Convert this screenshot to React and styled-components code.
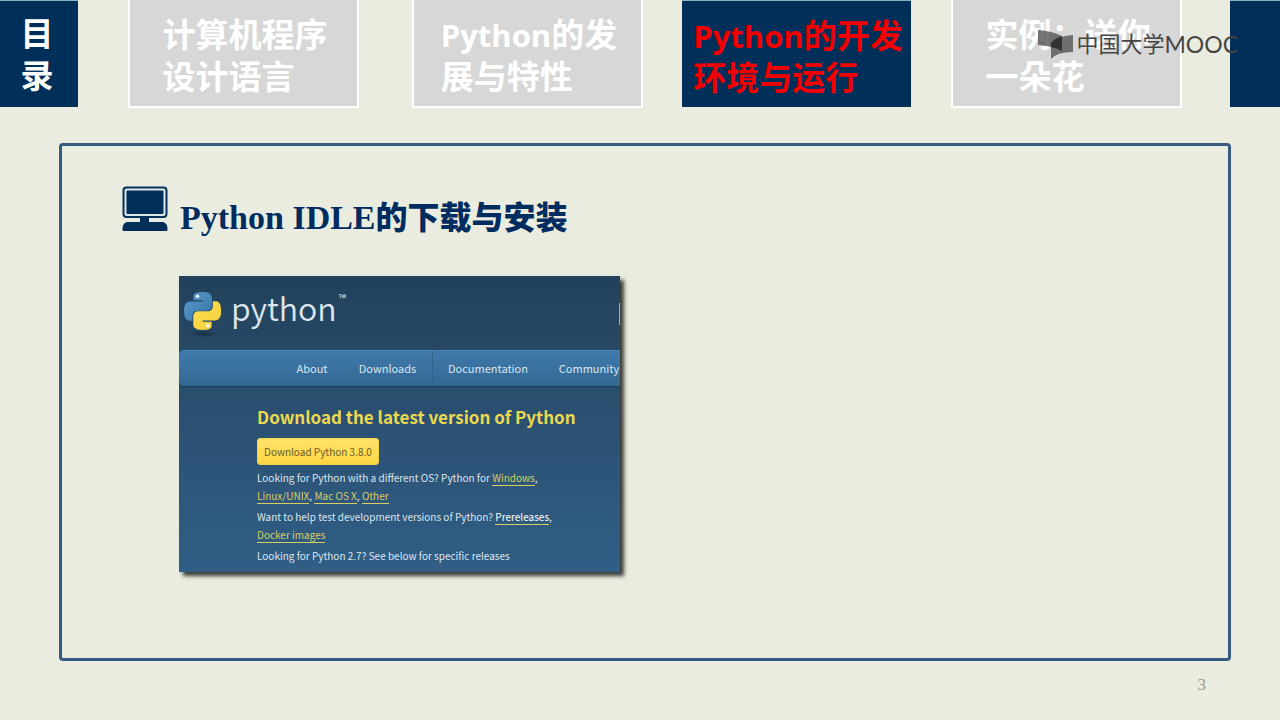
import React from 'react';
import styled, { createGlobalStyle } from 'styled-components';

const TABS = [
  { lines: [{ text: '计算机程序' }, { text: '设计语言' }], col: 3 },
  { lines: [{ latin: 'Python', text: '的发' }, { text: '展与特性' }], col: 5 },
  {
    lines: [{ latin: 'Python', text: '的开发' }, { text: '环境与运行' }],
    col: 7,
    active: true,
  },
  { lines: [{ text: '实例：送你' }, { text: '一朵花' }], col: 9 },
];

function App() {
  return (
    <>
      <GlobalStyle />
      <Slide>
        <TopBar>
          <Toc>
            <span>目</span>
            <span>录</span>
          </Toc>
          {TABS.map((tab) => (
            <Tab key={tab.col} href='#' $col={tab.col} $active={tab.active}>
              <TabText>
                {tab.lines.map((line) => (
                  <span key={line.text}>
                    {line.latin && <TabLatin>{line.latin}</TabLatin>}
                    {line.text}
                  </span>
                ))}
              </TabText>
            </Tab>
          ))}
          <EndBlock />
          <Watermark>
            <MoocMark />
            <span>中国大学</span>
            <Latin>MOOC</Latin>
          </Watermark>
        </TopBar>

        <Panel>
          <TitleRow>
            <ComputerIcon />
            <Title>
              Python IDLE<TitleHan>的下载与安装</TitleHan>
            </Title>
          </TitleRow>
          <PythonSite />
        </Panel>

        <Footer>3</Footer>
      </Slide>
    </>
  );
}

export default App;

// python.org download page
function PythonSite() {
  return (
    <Site>
      <SiteHeader>
        <PythonLogo />
        <Wordmark>python</Wordmark>
        <Trademark>™</Trademark>
        <DonateEdge />
      </SiteHeader>
      <SiteNav>
        <NavLink href='#' $width={62}>About</NavLink>
        <NavLink href='#' $width={89}>Downloads</NavLink>
        <NavLink href='#' $width={111} $divided>Documentation</NavLink>
        <NavLink href='#' $width={92}>Community</NavLink>
      </SiteNav>
      <SiteBody>
        <SiteHeading>Download the latest version of Python</SiteHeading>
        <DownloadButton>Download Python 3.8.0</DownloadButton>
        <Paragraph>
          Looking for Python with a different OS? Python for{' '}
          <TextLink href='#'>Windows</TextLink>,
          <br />
          <TextLink href='#'>Linux/UNIX</TextLink>,{' '}
          <TextLink href='#'>Mac OS X</TextLink>,{' '}
          <TextLink href='#'>Other</TextLink>
        </Paragraph>
        <Paragraph>
          Want to help test development versions of Python?{' '}
          <TextLink href='#' $light>Prereleases</TextLink>,
          <br />
          <TextLink href='#'>Docker images</TextLink>
        </Paragraph>
        <Paragraph>
          Looking for Python 2.7? See below for specific releases
        </Paragraph>
      </SiteBody>
    </Site>
  );
}

// Icons
function ComputerIcon() {
  return (
    <svg width='46' height='46' viewBox='0 0 46 46' aria-hidden='true'>
      <rect x='1.5' y='1.5' width='43' height='29.500' rx='3' fill='#dde7e6' stroke='#043259' strokeWidth='2' />
      <rect x='4.5' y='4.5' width='37' height='23.500' rx='1' fill='#00305a' />
      <path d='M18 31h9v5h-9z' fill='#00305a' />
      <path d='M5 36h36q4 1 4.500 6v2q0 1-1.500 1h-42q-1.500 0-1.500-1v-2q.5-5 4.500-6z' fill='#00305a' />
    </svg>
  );
}

function PythonLogo() {
  return (
    <svg width='40' height='48' viewBox='0 0 40 48' aria-hidden='true'>
      <defs>
        <linearGradient id='snakeBlue' x1='0' y1='0' x2='1' y2='1'>
          <stop offset='0' stopColor='#5b9fd0' />
          <stop offset='1' stopColor='#3470a2' />
        </linearGradient>
        <linearGradient id='snakeYellow' x1='0' y1='0' x2='1' y2='1'>
          <stop offset='0' stopColor='#ffe052' />
          <stop offset='1' stopColor='#f2cf3c' />
        </linearGradient>
        <radialGradient id='logoShadow'>
          <stop offset='0' stopColor='#14293b' stopOpacity='.8' />
          <stop offset='1' stopColor='#14293b' stopOpacity='0' />
        </radialGradient>
      </defs>
      <ellipse cx='20' cy='43' rx='15' ry='4' fill='url(#logoShadow)' />
      <path
        d='M19.400 1C10 1 10.500 5 10.500 5v4.300h9.100v1.300H7S1 9.900 1 20s5.300 9.700 5.300 9.700h3.100v-4.600s-.2-5.400 5.300-5.400h9.100s5.100.1 5.100-5V6.300S29.700 1 19.400 1z'
        fill='url(#snakeBlue)'
      />
      <circle cx='14.500' cy='5.300' r='1.800' fill='#fff' />
      <path
        d='M19.800 39c9.400 0 8.800-4 8.800-4v-4.300h-9v-1.300h12.600s6 .7 6-9.400-5.200-9.700-5.200-9.700h-3.200v4.600s.2 5.400-5.300 5.400h-9.100s-5.100-.1-5.100 5v8.400S9.600 39 19.800 39z'
        fill='url(#snakeYellow)'
      />
      <circle cx='24.800' cy='34.700' r='1.800' fill='#fff' />
    </svg>
  );
}

function MoocMark() {
  return (
    <svg width='38' height='30' viewBox='0 0 38 30' aria-hidden='true'>
      <path d='M0 1q14 1 24 6v15q-9-5-24-6z' fill='#555' fillOpacity='.8' />
      <path d='M13 14q6-7 22-8v17q-16 0-22 7z' fill='#555' fillOpacity='.8' />
      <path d='M13 14q4-5 11-7v15q-5-3-11-4z' fill='#333' />
    </svg>
  );
}

// styled-components
const GlobalStyle = createGlobalStyle`
  * {
    box-sizing: border-box;
  }

  body {
    margin: 0;
    background: #ebece0;
    font-family: 'Noto Sans CJK SC', sans-serif;
  }
`;

const Slide = styled.main`
  display: flex;
  flex-direction: column;
  min-height: 100vh;
`;

const TopBar = styled.nav`
  position: relative;
  display: grid;
  align-items: start;
  grid-template-columns: 78fr 50fr 231fr 53fr 231fr 39fr 229fr 40fr 231fr 48fr 50fr;
  font-family: 'Open Sans', 'Noto Sans CJK SC', sans-serif;
  font-size: 33px;
  font-weight: 700;
  line-height: 42px;
`;

const Toc = styled.div`
  display: flex;
  flex-direction: column;
  align-items: center;
  height: 107px;
  padding-top: 12px;
  padding-right: 4px;
  border-top: 1px solid #8fb0c0;
  color: #fff;
  background: #00305a;
`;

const Tab = styled.a`
  grid-column: ${(props) => props.$col};
  display: flex;
  justify-content: center;
  padding: 14px 0 8px 3px;
  height: 108px;
  white-space: nowrap;
  text-decoration: none;
  color: ${(props) => (props.$active ? '#f20000' : '#fff')};
  background: ${(props) => (props.$active ? '#00305a' : '#d7d7d7')};
  border: 2px solid #fff;
  border-top: none;
  ${(props) =>
    props.$active && 'height: 107px; border: none; border-top: 1px solid #8fb0c0;'}
`;

const TabText = styled.span`
  display: flex;
  flex-direction: column;
`;

const TabLatin = styled.span`
  font-size: 31px;
  line-height: 32px;
`;

const EndBlock = styled.div`
  grid-column: 11;
  height: 107px;
  border-top: 1px solid #8fb0c0;
  background: #00305a;
`;

const Watermark = styled.div`
  position: absolute;
  top: 29px;
  right: 42px;
  display: flex;
  align-items: center;
  font-family: Lato, 'Noto Sans CJK SC', sans-serif;
  font-size: 22px;
  font-weight: 400;
  line-height: 30px;
  color: #454545;
`;

const Latin = styled.span`
  font-size: 23px;
`;

const Panel = styled.section`
  flex: 1;
  margin: 35px 49px 0 59px;
  padding: 40px 60px;
  border: 3px solid #365b80;
  border-radius: 4px;
`;

const TitleRow = styled.div`
  display: flex;
  align-items: flex-start;
  gap: 12px;
`;

const Title = styled.h1`
  margin: 7px 0 0;
  font-family: 'Liberation Serif', 'Noto Sans CJK SC', serif;
  font-size: 34px;
  font-weight: 700;
  line-height: 44px;
  color: #002c60;
`;

const TitleHan = styled.span`
  font-family: 'Noto Sans CJK SC', sans-serif;
  font-size: 32px;
  font-weight: 900;
`;

const Site = styled.article`
  margin: 36px 0 0 57px;
  max-width: 441px;
  min-height: 296px;
  overflow: hidden;
  color: #dbe6ee;
  background: linear-gradient(#22415a, #2c5275 55%, #305e86);
  box-shadow: 4px 4px 4px #3c3c38;
`;

const SiteHeader = styled.header`
  display: flex;
  align-items: flex-start;
  height: 74px;
  padding: 15px 0 0 4px;
`;

const Wordmark = styled.span`
  margin-left: 8px;
  font-size: 32px;
  font-weight: 350;
  line-height: 32px;
`;

const Trademark = styled.sup`
  margin-left: 2px;
  font-size: 10px;
  line-height: 14px;
`;

const DonateEdge = styled.span`
  width: 1px;
  height: 22px;
  margin: 12px 0 0 auto;
  background: #c8b53e;
`;

const SiteNav = styled.nav`
  display: flex;
  height: 36px;
  padding-left: 102px;
  border-top: 1px solid #4a84b3;
  border-radius: 5px 0 0 5px;
  background: linear-gradient(#3f79ab, #336892);
  box-shadow: 0 1px 2px #1d3d58;
`;

const NavLink = styled.a`
  flex: none;
  width: ${(props) => props.$width}px;
  text-align: center;
  font-size: 11px;
  line-height: 34px;
  text-decoration: none;
  color: #dbe6ee;
  border-left: ${(props) => props.$divided && '1px solid #30628c'};
`;

const SiteBody = styled.div`
  padding: 18px 20px 4px 78px;
  font-size: 10px;
  line-height: 18px;
`;

const SiteHeading = styled.h2`
  margin: 0 0 9px;
  font-size: 17px;
  font-weight: 700;
  line-height: 25px;
  color: #ecd94f;
`;

const DownloadButton = styled.button`
  display: block;
  height: 27px;
  margin-bottom: 4px;
  padding: 0 6px;
  border: 1px solid #f3d44a;
  border-radius: 3px;
  font-family: inherit;
  font-size: 10px;
  color: #6a5c2c;
  background: linear-gradient(#ffe26b, #fdd63f);
`;

const Paragraph = styled.p`
  margin: 0 0 3px;
  white-space: nowrap;
`;

const TextLink = styled.a`
  text-decoration: none;
  color: ${(props) => (props.$light ? '#fff' : '#d9cd62')};
  border-bottom: 1px solid #d9cd62;
`;

const Footer = styled.footer`
  height: 59px;
  padding: 12px 74px 0 0;
  text-align: right;
  font-family: 'Liberation Serif', serif;
  font-size: 17px;
  line-height: 24px;
  color: #9b9b93;
`;
